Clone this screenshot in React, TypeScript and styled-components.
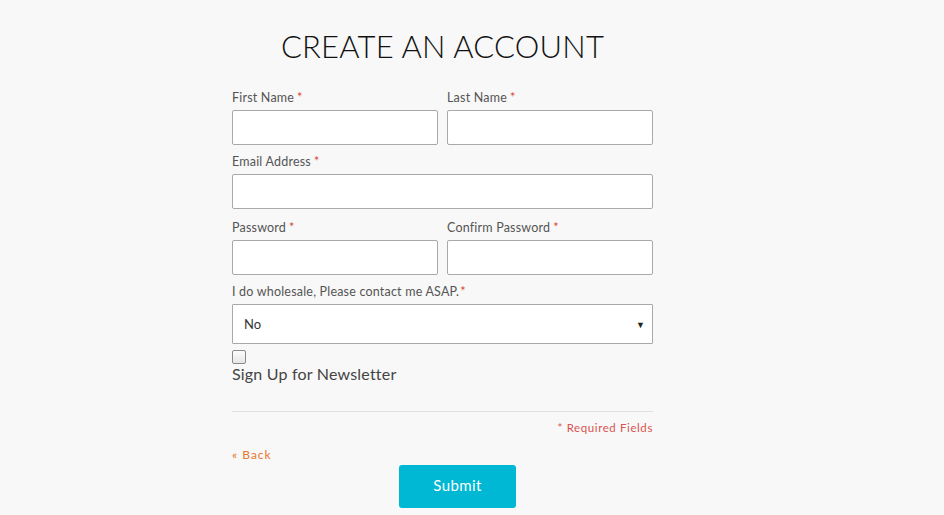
import React from "react";
import styled, { createGlobalStyle } from "styled-components";

const GlobalStyle = createGlobalStyle`
  html, body {
    margin: 0;
    padding: 0;
    background: #f8f8f8;
    font-family: Lato, "Open Sans", "Liberation Sans", sans-serif;
  }
`;

const Page = styled.div`
  width: 885px;
  height: 515px;
  overflow: hidden;
  display: flex;
  flex-direction: column;
  align-items: center;
`;

const Title = styled.h1`
  margin: 24px 0 0;
  height: 44px;
  line-height: 44px;
  font-size: 31px;
  font-weight: 300;
  color: #111;
  letter-spacing: 0.2px;
`;

const Form = styled.form`
  width: 421px;
  margin-top: 22px;
  display: flex;
  flex-direction: column;
`;

const Row = styled.div<{ $gap?: number }>`
  display: grid;
  grid-template-columns: 206px 206px;
  column-gap: 9px;
  margin-bottom: ${({ $gap }) => $gap ?? 9}px;
`;

const Field = styled.div<{ $wide?: boolean }>`
  display: flex;
  flex-direction: column;
  grid-column: ${({ $wide }) => ($wide ? "1 / -1" : "auto")};
`;

const Label = styled.label`
  height: 20px;
  line-height: 16px;
  font-size: 12.5px;
  color: #555;
  letter-spacing: 0.2px;
`;

const Star = styled.span<{ $tight?: boolean }>`
  color: #d9443a;
  margin-left: ${({ $tight }) => ($tight ? 1 : 3)}px;
`;

const Input = styled.input`
  box-sizing: border-box;
  height: 35px;
  width: 100%;
  border: 1px solid #a9a9a9;
  border-radius: 2px;
  background: #fff;
  margin: 0;
`;

const SelectBox = styled.div`
  box-sizing: border-box;
  height: 40px;
  border: 1px solid #a9a9a9;
  border-radius: 1px;
  background: #fff;
  display: flex;
  align-items: center;
  justify-content: space-between;
  padding: 0 7px 0 11px;
  font-size: 13px;
  color: #333;
`;

const Arrow = styled.span`
  font-size: 9px;
  color: #222;
`;

const Check = styled.div`
  margin-top: 6px;
  width: 12px;
  height: 12px;
  border: 1px solid #8a8a8a;
  border-radius: 2px;
  background: linear-gradient(#fdfdfd, #e6e6e6);
`;

const CheckText = styled.div`
  font-size: 16px;
  color: #444;
  line-height: 20px;
  letter-spacing: 0.2px;
`;

const Divider = styled.hr`
  border: none;
  border-top: 1px solid #e2e2e2;
  margin: 27px 0 0;
`;

const Required = styled.div`
  text-align: right;
  margin-top: 9px;
  font-size: 11.5px;
  color: #d9534f;
  letter-spacing: 0.6px;
`;

const Back = styled.a`
  margin-top: 13px;
  font-size: 12px;
  color: #e8762c;
  letter-spacing: 1px;
  text-decoration: none;
`;

const Submit = styled.button`
  align-self: center;
  margin-top: 3px;
  margin-left: 30px;
  width: 117px;
  height: 43px;
  padding: 0 0 3px;
  border: none;
  border-radius: 3px;
  background: #00b8d4;
  color: #fff;
  font-family: inherit;
  font-size: 15px;
  letter-spacing: 0.4px;
`;

export default function App() {
  return (
    <Page>
      <GlobalStyle />
      <Title>CREATE AN ACCOUNT</Title>
      <Form onSubmit={(e) => e.preventDefault()}>
        <Row>
          <Field>
            <Label>First Name<Star>*</Star></Label>
            <Input />
          </Field>
          <Field>
            <Label>Last Name<Star>*</Star></Label>
            <Input />
          </Field>
        </Row>
        <Row $gap={11}>
          <Field $wide>
            <Label>Email Address<Star>*</Star></Label>
            <Input />
          </Field>
        </Row>
        <Row>
          <Field>
            <Label>Password<Star>*</Star></Label>
            <Input type="password" />
          </Field>
          <Field>
            <Label>Confirm Password<Star>*</Star></Label>
            <Input type="password" />
          </Field>
        </Row>
        <Field>
          <Label>I do wholesale, Please contact me ASAP.<Star $tight>*</Star></Label>
          <SelectBox>
            No
            <Arrow>▼</Arrow>
          </SelectBox>
        </Field>
        <Check />
        <CheckText>Sign Up for Newsletter</CheckText>
        <Divider />
        <Required>* Required Fields</Required>
        <Back href="#">« Back</Back>
        <Submit type="submit">Submit</Submit>
      </Form>
    </Page>
  );
}
